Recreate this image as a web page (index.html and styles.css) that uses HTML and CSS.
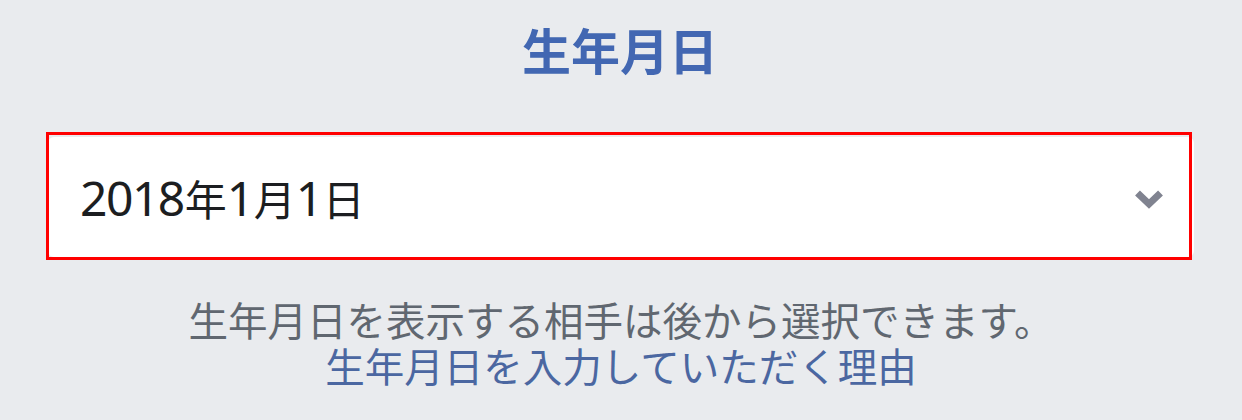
FILE: index.html
```html
<!DOCTYPE html>
<html lang="ja">
<head>
<meta charset="utf-8">
<link rel="stylesheet" href="styles.css">
</head>
<body>
<div class="page">
  <h1 class="title">生年月日</h1>
  <div class="field">
    <div class="select">
      <span class="value">2018<span class="cj">年</span>1<span class="cj">月</span>1<span class="cj">日</span></span>
      <svg class="chevron" width="30" height="22" viewBox="0 0 30 22"><path d="M3.5 5 L15 16 L26.5 5" fill="none" stroke="#808390" stroke-width="7"/></svg>
    </div>
    <div class="highlight"></div>
  </div>
  <p class="note">生年月日を表示する相手は後から選択できます。<br><a class="link">生年月日を入力していただく理由</a></p>
</div>
</body>
</html>
```
FILE: styles.css
```css
html, body {
  margin: 0;
  padding: 0;
  background: #e9ebee;
}
.page {
  font-family: "Noto Sans", "Noto Sans CJK JP", sans-serif;
  display: flex;
  flex-direction: column;
  align-items: center;
  height: 420px;
  overflow: hidden;
}
.title {
  margin: 20px 0 0 -2px;
  font-size: 49px;
  line-height: 58px;
  font-weight: 700;
  color: #4267b2;
  font-family: "Noto Sans CJK JP", sans-serif;
}
.field {
  position: relative;
  margin-top: 54px;
  width: 1148px;
  height: 128px;
  align-self: flex-start;
  margin-left: 46px;
}
.select {
  box-sizing: border-box;
  height: 120px;
  margin-top: 5px;
  margin-left: 2px;
  background: #fff;
  border-radius: 6px;
  display: flex;
  align-items: center;
  justify-content: space-between;
  padding: 0 30px 0 32px;
}
.value {
  font-size: 48px;
  color: #1c1e21;
  letter-spacing: -1.5px;
}
.value .cj {
  font-size: 42px;
  letter-spacing: -1px;
  margin: 0 1px;
}
.chevron {
  display: block;
  margin-top: 4px;
}
.highlight {
  position: absolute;
  left: 0;
  top: 0;
  width: 1146px;
  height: 128px;
  box-sizing: border-box;
  border: 3px solid #ff0000;
}
.note {
  margin: 36px 0 0;
  text-align: center;
  font-size: 39.5px;
  line-height: 46px;
  color: #606770;
  font-family: "Noto Sans CJK JP", sans-serif;
}
.link {
  color: #4b67a1;
  text-decoration: none;
}
```
